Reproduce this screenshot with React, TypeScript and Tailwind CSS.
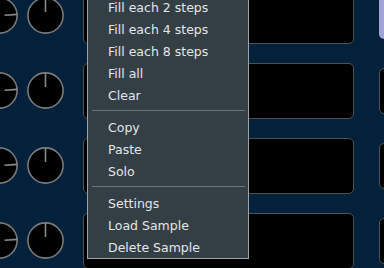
import React from "react";

function Knob({ side, className }: { side?: boolean; className?: string }) {
  return (
    <svg width="37" height="37" viewBox="0 0 37 37" className={className}>
      <circle cx="18.5" cy="18.5" r="17.6" fill="#000" stroke="#7a7a7a" strokeWidth="1.6" />
      {side ? (
        <line x1="23.5" y1="18.3" x2="36.5" y2="17.4" stroke="#8a8a8a" strokeWidth="1.6" />
      ) : (
        <line x1="18.5" y1="1" x2="18.5" y2="15" stroke="#8a8a8a" strokeWidth="1.6" />
      )}
    </svg>
  );
}

const group1 = ["Fill each 2 steps", "Fill each 4 steps", "Fill each 8 steps", "Fill all", "Clear"];
const group2 = ["Copy", "Paste", "Solo"];
const group3 = ["Settings", "Load Sample", "Delete Sample"];

function Item({ label }: { label: string }) {
  return (
    <div className="h-[22px] flex items-center pl-[20px] pt-[2px] text-[12.5px] text-[#e4e6e7] leading-none whitespace-nowrap">
      {label}
    </div>
  );
}

function Sep() {
  return (
    <div className="h-[10px] pt-[4px] pl-[4px] pr-[3px]">
      <div className="h-px bg-[#6b767b]" />
    </div>
  );
}

export default function App() {
  return (
    <div
      className="relative w-[384px] h-[268px] overflow-hidden bg-[#03213a]"
      style={{ fontFamily: '"DejaVu Sans", sans-serif' }}
    >
      <div className="-mt-[22px] flex flex-col">
        {[0, 1, 2, 3].map((i) => (
          <div key={i} className="h-[75px] flex items-center shrink-0">
            <Knob side className="-ml-[19px] shrink-0" />
            <Knob className="ml-[9px] shrink-0" />
            <div className="ml-[19px] w-[271px] h-[56px] shrink-0 rounded-[5px] border border-[#505050] bg-black" />
            <div
              className={
                i === 0
                  ? "ml-[25px] w-[40px] h-[46px] shrink-0 rounded-[5px] bg-[#a0a3d4]"
                  : "ml-[25px] w-[40px] h-[46px] shrink-0 rounded-[5px] border border-[#505050] bg-black"
              }
            />
          </div>
        ))}
      </div>

      <div className="absolute left-[87px] top-[-5px] w-[162px] border border-[#9ba3a7] bg-[#343e45] flex flex-col">
        {group1.map((l) => (
          <Item key={l} label={l} />
        ))}
        <Sep />
        {group2.map((l) => (
          <Item key={l} label={l} />
        ))}
        <Sep />
        {group3.map((l) => (
          <Item key={l} label={l} />
        ))}
      </div>
    </div>
  );
}
